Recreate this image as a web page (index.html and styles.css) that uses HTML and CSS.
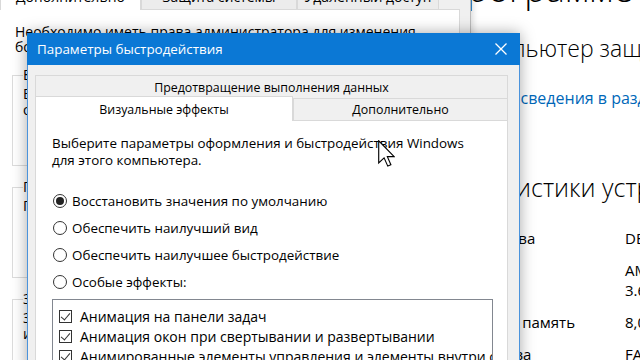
FILE: index.html
```html
<!DOCTYPE html>
<html lang="ru">
<head>
	<meta charset="utf-8" />
	<title>Параметры быстродействия</title>
	<link rel="stylesheet" href="styles.css">
</head>
<body>
	<main class="about">
		<h1 class="about-title">О программе</h1>
		<p class="about-status">Ваш компьютер защищен и отслеживается.</p>
		<a class="about-link" href="#">Просмотреть сведения в разделе «Безопасность Windows»</a>
		<h2 class="about-sub">Характеристики устройства</h2>
		<dl class="specs">
			<dt>Имя устройства</dt><dd>DESKTOP-7QK2M1L</dd>
			<dt>Процессор</dt><dd>AMD Ryzen 5 1600 Six-Core Processor<br>3.60 GHz</dd>
			<dt>Оперативная память</dt><dd>8,00 ГБ</dd>
			<dt>Код устройства</dt><dd>FA3C91D2-0B7E-4C1A</dd>
		</dl>
	</main>

	<div class="sysprops">
		<div class="sp-tabs">
			<div class="sp-tab sp-tab-active">Дополнительно</div>
			<div class="sp-tab">Защита системы</div>
			<div class="sp-tab">Удаленный доступ</div>
		</div>
		<div class="sp-panel">
			<p class="sp-note">Необходимо иметь права администратора для изменения большинства перечисленных параметров.</p>
			<fieldset class="group">
				<legend>Быстродействие</legend>
				<p>Визуальные эффекты, использование процессора, оперативной и виртуальной памяти</p>
				<div class="group-actions"><button class="btn">Параметры...</button></div>
			</fieldset>
			<fieldset class="group">
				<legend>Профили пользователей</legend>
				<p>Параметры рабочего стола, относящиеся ко входу в систему</p>
				<div class="group-actions"><button class="btn">Параметры...</button></div>
			</fieldset>
			<fieldset class="group">
				<legend>Загрузка и восстановление</legend>
				<p>Загрузка и восстановление системы, отладочная информация</p>
			</fieldset>
		</div>
	</div>

	<div class="perf">
		<div class="perf-titlebar">
			<span class="perf-title">Параметры быстродействия</span>
			<svg class="perf-close" width="12" height="12" viewBox="0 0 12 12"><path d="M0.5 0.5L11.5 11.5M11.5 0.5L0.5 11.5" stroke="#fff" stroke-width="1.3" fill="none"/></svg>
		</div>
		<div class="perf-body">
			<div class="tabs">
				<div class="tab-row">
					<div class="tab tab-wide">Предотвращение выполнения данных</div>
				</div>
				<div class="tab-row">
					<div class="tab tab-active">Визуальные эффекты</div>
					<div class="tab tab-rest">Дополнительно</div>
				</div>
			</div>
			<div class="tab-panel">
				<p class="intro">Выберите параметры оформления и быстродействия Windows<br>для этого компьютера.</p>
				<ul class="radios">
					<li><span class="radio radio-on"></span>Восстановить значения по умолчанию</li>
					<li><span class="radio"></span>Обеспечить наилучший вид</li>
					<li><span class="radio"></span>Обеспечить наилучшее быстродействие</li>
					<li><span class="radio"></span>Особые эффекты:</li>
				</ul>
				<ul class="effects">
					<li><span class="check"></span>Анимация на панели задач</li>
					<li><span class="check"></span>Анимация окон при свертывании и развертывании</li>
					<li><span class="check"></span>Анимированные элементы управления и элементы внутри окна</li>
				</ul>
			</div>
		</div>
	</div>

	<svg class="cursor" width="17" height="27" viewBox="0 0 12 19">
		<path d="M0.5 0.5V16.2L4.3 12.6L6.9 18.4L9.1 17.4L6.6 11.7H11.4Z" fill="#fff" stroke="#000" stroke-width="0.8" stroke-linejoin="miter"/>
	</svg>
</body>
</html>
```

FILE: styles.css
```css
body {
	margin: 0;
	width: 640px;
	height: 360px;
	overflow: hidden;
	position: relative;
	background: #fff;
	font-family: "Open Sans", "Noto Sans", sans-serif;
	color: #000;
}

/* settings page behind everything */

.about {
	display: flex;
	flex-direction: column;
	align-items: flex-start;
	padding-left: 420px;
	white-space: nowrap;
}

.about-title {
	margin: -29px 0 0 -12px;
	font-size: 36px;
	font-weight: 300;
	line-height: 36px;
}

.about-status {
	margin: 26px 0 0;
	font-size: 23px;
	font-weight: 300;
	line-height: 30px;
}

.about-link {
	display: block;
	margin: 24px 0 0 -7px;
	font-size: 16px;
	line-height: 22px;
	color: #0067b8;
	text-decoration: none;
}

.about-sub {
	margin: 60px 0 0 -10px;
	font-size: 25px;
	font-weight: 300;
	line-height: 36px;
}

.specs {
	display: grid;
	grid-template-columns: 205px auto;
	row-gap: 12px;
	margin: 23px 0 0;
	font-size: 15px;
	line-height: 20px;
}

.specs dd {
	margin: 0;
}

/* system properties window */

.sysprops {
	position: absolute;
	left: -10px;
	top: -19px;
	width: 470px;
	height: 400px;
	padding-right: 10px;
	background: #f0f0f0;
	border-right: 1px solid #b9b9b9;
	box-shadow: 2px 0 6px rgba(0, 0, 0, 0.15);
	font-size: 14px;
}

.sp-tabs {
	display: flex;
	padding-left: 10px;
	height: 28px;
}

.sp-tab {
	display: flex;
	align-items: center;
	justify-content: center;
	height: 26px;
	margin-top: 2px;
	background: #ececec;
	border: 1px solid #d9d9d9;
	border-bottom: 0;
	box-sizing: border-box;
}

.sp-tab:nth-child(2) { width: 156px; }
.sp-tab:nth-child(3) { width: 142px; }

.sp-tab-active {
	width: 141px;
	height: 29px;
	margin-top: 0;
	background: #fff;
	position: relative;
	z-index: 1;
}

.sp-panel {
	margin-left: 5px;
	height: 380px;
	padding: 14px 0 0 16px;
	background: #fff;
	border: 1px solid #d9d9d9;
	box-sizing: border-box;
}

.sp-note {
	margin: 0;
	padding-left: 3px;
	line-height: 15px;
	width: 430px;
}

.group {
	margin: 13px 0 0;
	padding: 0 10px;
	height: 99px;
	width: 440px;
	box-sizing: border-box;
	border: 1px solid #dcdcdc;
}

.group legend {
	padding: 0;
	line-height: 16px;
}

.group p {
	margin: 3px 0 0;
	line-height: 16px;
}

.group-actions {
	display: flex;
	justify-content: flex-end;
	margin-top: 6px;
}

.btn {
	font: inherit;
	font-size: 13px;
	padding: 2px 14px;
	background: #e1e1e1;
	border: 1px solid #adadad;
}

/* performance options dialog */

.perf {
	position: absolute;
	left: 27px;
	top: 33px;
	width: 493px;
	height: 340px;
	box-sizing: border-box;
	background: #f0f0f0;
	border: 1px solid #4a93dc;
	border-top: 0;
	box-shadow: 0 0 14px rgba(0, 0, 0, 0.35);
	font-size: 13.4px;
}

.perf-titlebar {
	display: flex;
	align-items: center;
	justify-content: space-between;
	height: 32px;
	margin: 0 -1px;
	padding: 0 13px 0 10px;
	background: #0b78d5;
	color: #fff;
}

.perf-title {
	font-size: 13.4px;
}

.perf-body {
	padding: 10px 11px 0 7px;
}

.tab-row {
	display: flex;
}

.tab {
	display: flex;
	align-items: center;
	justify-content: center;
	height: 23px;
	background: #f0f0f0;
	border: 1px solid #d9d9d9;
	border-bottom: 0;
	box-sizing: border-box;
	white-space: nowrap;
	font-size: 12.4px;
}

.tab-wide {
	flex: 1;
}

.tab-active {
	width: 258px;
	height: 25px;
	margin-top: -2px;
	background: #fff;
	position: relative;
	z-index: 1;
	margin-bottom: -1px;
}

.tab-rest {
	flex: 1;
	height: 22px;
}

.tab-panel {
	height: 260px;
	padding: 14px 0 0 16px;
	background: #fff;
	border: 1px solid #d9d9d9;
	box-sizing: border-box;
}

.intro {
	margin: 0;
	line-height: 17px;
}

.radios {
	list-style: none;
	margin: 18px 0 0;
	padding: 0;
}

.radios li {
	display: flex;
	align-items: center;
	height: 27px;
}

.radio {
	width: 14px;
	height: 14px;
	margin: 0 5px 0 1px;
	border: 1px solid #333;
	border-radius: 50%;
	box-sizing: border-box;
	display: flex;
	align-items: center;
	justify-content: center;
}

.radio-on::after {
	content: "";
	width: 8px;
	height: 8px;
	border-radius: 50%;
	background: #222;
}

.effects {
	list-style: none;
	margin: 4px 0 0;
	padding: 6px 0 0 6px;
	width: 441px;
	height: 70px;
	box-sizing: border-box;
	border: 1px solid #828790;
	overflow: hidden;
	white-space: nowrap;
	font-size: 14px;
}

.effects li {
	display: flex;
	align-items: center;
	height: 20px;
}

.check {
	position: relative;
	flex: none;
	width: 13px;
	height: 13px;
	margin-right: 8px;
	border: 1px solid #333;
	box-sizing: border-box;
}

.check::after {
	content: "";
	position: absolute;
	left: 3px;
	top: 0px;
	width: 4px;
	height: 8px;
	border: solid #333;
	border-width: 0 1.3px 1.3px 0;
	transform: rotate(40deg);
}

.cursor {
	position: absolute;
	left: 378px;
	top: 140px;
}
```
